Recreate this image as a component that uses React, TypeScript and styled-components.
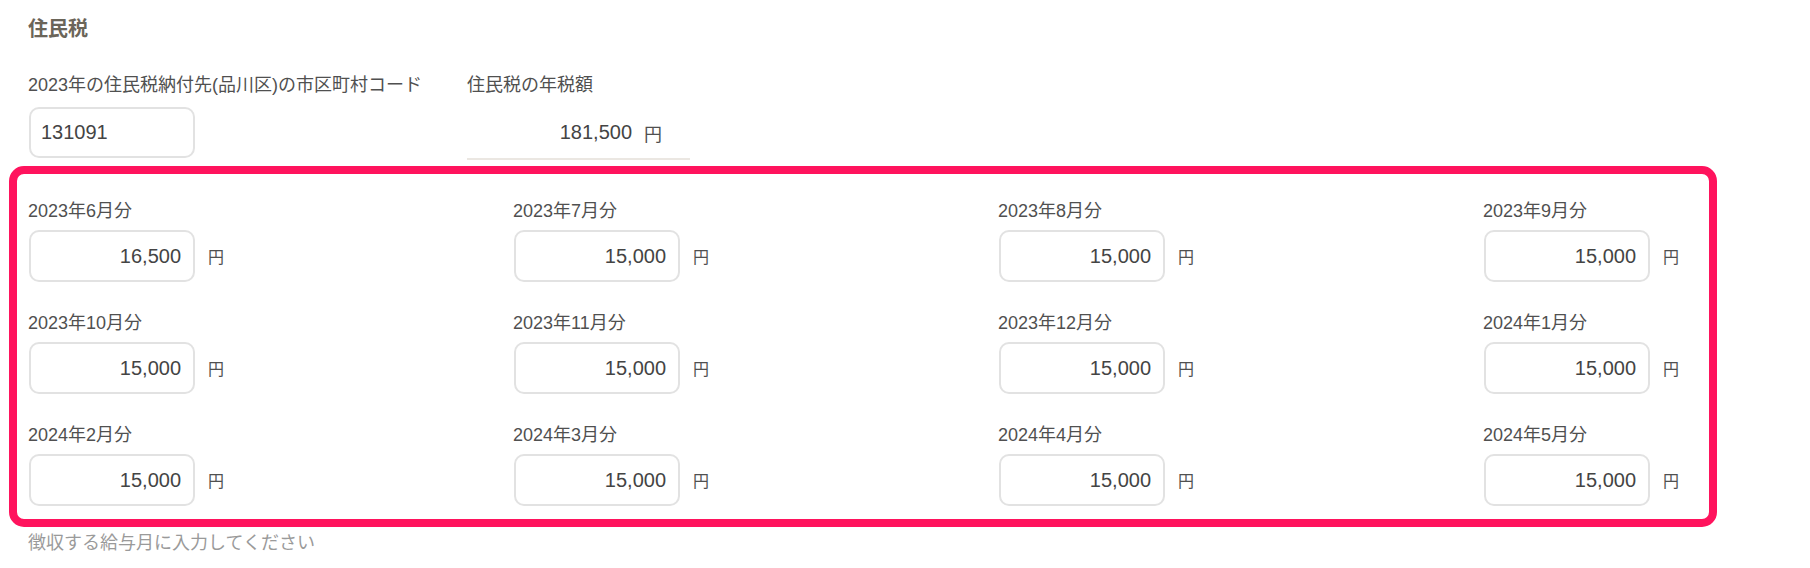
import React from 'react';
import { styled, createGlobalStyle } from 'styled-components';

const months = [
  { label: '2023年6月分', value: '16,500' },
  { label: '2023年7月分', value: '15,000' },
  { label: '2023年8月分', value: '15,000' },
  { label: '2023年9月分', value: '15,000' },
  { label: '2023年10月分', value: '15,000' },
  { label: '2023年11月分', value: '15,000' },
  { label: '2023年12月分', value: '15,000' },
  { label: '2024年1月分', value: '15,000' },
  { label: '2024年2月分', value: '15,000' },
  { label: '2024年3月分', value: '15,000' },
  { label: '2024年4月分', value: '15,000' },
  { label: '2024年5月分', value: '15,000' },
];

const App = () => {
  return (
    <>
      <GlobalStyle />
      <Page>
        <Heading>住民税</Heading>
        <TopRow>
          <Field>
            <Label>2023年の住民税納付先(品川区)の市区町村コード</Label>
            <CodeInput defaultValue='131091' />
          </Field>
          <Field>
            <Label>住民税の年税額</Label>
            <Amount>
              <span>181,500</span>
              <Yen $large>円</Yen>
            </Amount>
          </Field>
        </TopRow>
        <MonthBox>
          {months.map((m) => (
            <MonthItem key={m.label}>
              <MonthLabel>{m.label}</MonthLabel>
              <InputRow>
                <MoneyInput defaultValue={m.value} />
                <Yen>円</Yen>
              </InputRow>
            </MonthItem>
          ))}
        </MonthBox>
        <Hint>徴収する給与月に入力してください</Hint>
      </Page>
    </>
  );
};

export default App;

const GlobalStyle = createGlobalStyle`
  body {
    margin: 0;
    background: #fff;
    font-family: 'Liberation Sans', Arial, 'Noto Sans CJK JP', sans-serif;
  }
`;

const Page = styled.div`
  width: 1810px;
  height: 568px;
  padding: 14px 0 0 0;
  box-sizing: border-box;
`;

const Heading = styled.h2`
  margin: 0 0 0 28px;
  font-size: 20px;
  line-height: 30px;
  font-weight: bold;
  color: #6b6559;
`;

const TopRow = styled.div`
  display: grid;
  grid-template-columns: 439px 223px;
  margin: 29px 0 0 28px;
`;

const Field = styled.div`
  display: flex;
  flex-direction: column;
`;

const Label = styled.div`
  font-size: 18px;
  line-height: 24px;
  color: #505050;
  margin-bottom: 10px;
  white-space: nowrap;
`;

const CodeInput = styled.input`
  box-sizing: border-box;
  width: 166px;
  height: 51px;
  margin-left: 1px;
  border: 2px solid #e2e2e2;
  border-radius: 10px;
  padding: 0 10px;
  font-family: inherit;
  font-size: 20px;
  color: #444;
  outline: none;
`;

const Amount = styled.div`
  box-sizing: border-box;
  width: 223px;
  height: 53px;
  display: flex;
  align-items: center;
  justify-content: flex-end;
  gap: 12px;
  padding-right: 28px;
  border-bottom: 2px solid #ebe7e2;
  font-size: 20px;
  color: #444;
`;

const Yen = styled.span<{ $large?: boolean }>`
  font-family: 'Noto Sans CJK JP', sans-serif;
  font-size: ${(p) => (p.$large ? '18px' : '16px')};
  color: #505050;
`;

const MonthBox = styled.div`
  box-sizing: border-box;
  width: 1708px;
  margin: 6px 0 0 9px;
  border: 8px solid #ff135d;
  border-radius: 15px;
  padding: 25px 26px 13px 11px;
  display: grid;
  grid-template-columns: repeat(4, 200px);
  justify-content: space-between;
  row-gap: 29px;
`;

const MonthItem = styled.div`
  display: flex;
  flex-direction: column;
`;

const MonthLabel = styled.div`
  font-size: 18px;
  line-height: 24px;
  color: #505050;
  margin-bottom: 7px;
`;

const InputRow = styled.div`
  display: flex;
  align-items: center;
  gap: 13px;
`;

const MoneyInput = styled.input`
  box-sizing: border-box;
  width: 166px;
  height: 52px;
  margin-left: 1px;
  border: 2px solid #e2e2e2;
  border-radius: 10px;
  padding: 0 12px;
  text-align: right;
  font-family: inherit;
  font-size: 20px;
  color: #444;
  outline: none;
`;

const Hint = styled.div`
  margin: 4px 0 0 28px;
  font-size: 18px;
  line-height: 24px;
  color: #9a9a9a;
`;
